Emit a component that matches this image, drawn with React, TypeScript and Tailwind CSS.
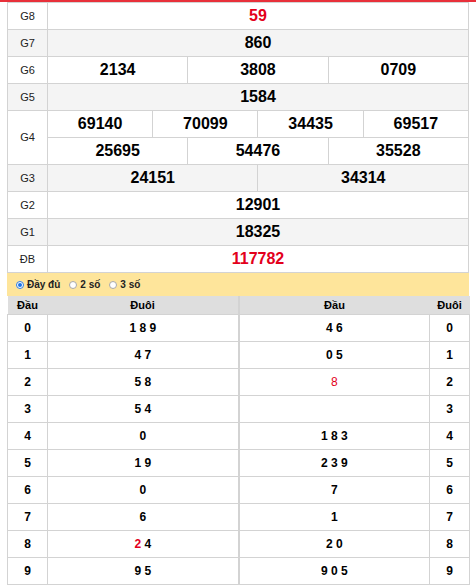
type Cell = { v: string; span: number; red?: boolean };

const prizes: { g: string; rows: Cell[][] }[] = [
  { g: "G8", rows: [[{ v: "59", span: 12, red: true }]] },
  { g: "G7", rows: [[{ v: "860", span: 12 }]] },
  {
    g: "G6",
    rows: [[{ v: "2134", span: 4 }, { v: "3808", span: 4 }, { v: "0709", span: 4 }]],
  },
  { g: "G5", rows: [[{ v: "1584", span: 12 }]] },
  {
    g: "G4",
    rows: [
      [
        { v: "69140", span: 3 },
        { v: "70099", span: 3 },
        { v: "34435", span: 3 },
        { v: "69517", span: 3 },
      ],
      [{ v: "25695", span: 4 }, { v: "54476", span: 4 }, { v: "35528", span: 4 }],
    ],
  },
  { g: "G3", rows: [[{ v: "24151", span: 6 }, { v: "34314", span: 6 }]] },
  { g: "G2", rows: [[{ v: "12901", span: 12 }]] },
  { g: "G1", rows: [[{ v: "18325", span: 12 }]] },
  { g: "ĐB", rows: [[{ v: "117782", span: 12, red: true }]] },
];

// [đuôi of đầu i, đầu of đuôi i]
const loto: [React.ReactNode, React.ReactNode][] = [
  ["1 8 9", "4 6"],
  ["4 7", "0 5"],
  ["5 8", <span className="font-normal text-[#e3001b]">8</span>],
  ["5 4", ""],
  ["0", "1 8 3"],
  ["1 9", "2 3 9"],
  ["0", "7"],
  ["6", "1"],
  [
    <>
      <span className="text-[#e3001b]">2</span> 4
    </>,
    "2 0",
  ],
  ["9 5", "9 0 5"],
];

const bd = "border border-[#d3d3d3]";

function Radio({ label, checked }: { label: string; checked?: boolean }) {
  return (
    <label className="flex items-center gap-[3px]">
      <span
        className={
          checked
            ? "flex h-[8px] w-[8px] items-center justify-center rounded-full border border-[#2f7de1] bg-white"
            : "h-[8px] w-[8px] rounded-full border border-[#a9a9a9] bg-white"
        }
      >
        {checked && <span className="h-[4px] w-[4px] rounded-full bg-[#1a73e8]" />}
      </span>
      <span>{label}</span>
    </label>
  );
}

export default function App() {
  return (
    <div className="min-h-[586px] border-t-2 border-[#e8303a] bg-white px-[7px] font-['Liberation_Sans',Arial,sans-serif] text-black">
      <table className="w-[462px] table-fixed border-collapse">
        <colgroup>
          <col className="w-[40px]" />
          {Array.from({ length: 12 }).map((_, i) => (
            <col key={i} />
          ))}
        </colgroup>
        <tbody>
          {prizes.map((p, pi) =>
            p.rows.map((row, ri) => (
              <tr key={p.g + ri} className={`h-[27px] ${pi % 2 === 1 ? "bg-[#f4f4f4]" : "bg-white"}`}>
                {ri === 0 && (
                  <td rowSpan={p.rows.length} className={`${bd} p-0 text-center text-[11px] text-[#222]`}>
                    {p.g}
                  </td>
                )}
                {row.map((c, ci) => (
                  <td
                    key={ci}
                    colSpan={c.span}
                    className={`${bd} p-0 text-center text-[16px] font-bold leading-none ${
                      c.red ? "text-[#e3001b]" : ""
                    }`}
                  >
                    {c.v}
                  </td>
                ))}
              </tr>
            ))
          )}
        </tbody>
      </table>

      <div className="flex h-[23px] items-center gap-[9px] bg-[#fee59b] pl-[9px] text-[10px] font-bold text-[#222]">
        <Radio label="Đầy đủ" checked />
        <Radio label="2 số" />
        <Radio label="3 số" />
      </div>

      <table className="w-[462px] table-fixed border-collapse text-[12px] font-bold">
        <colgroup>
          <col className="w-[40px]" />
          <col className="w-[191px]" />
          <col className="w-[191px]" />
          <col className="w-[40px]" />
        </colgroup>
        <thead>
          <tr className="h-[18px] bg-[#dedede] text-[11px]">
            <th className="p-0 text-center font-bold">Đầu</th>
            <th className="border-r-2 border-[#d3d3d3] p-0 text-center font-bold">Đuôi</th>
            <th className="p-0 text-center font-bold">Đầu</th>
            <th className="p-0 text-center font-bold">Đuôi</th>
          </tr>
        </thead>
        <tbody>
          {loto.map((r, i) => (
            <tr key={i} className="h-[27px]">
              <td className={`${bd} p-0 text-center`}>{i}</td>
              <td className={`${bd} border-r-2 p-0 text-center`}>{r[0]}</td>
              <td className={`${bd} p-0 text-center`}>{r[1]}</td>
              <td className={`${bd} p-0 text-center`}>{i}</td>
            </tr>
          ))}
        </tbody>
      </table>
    </div>
  );
}
